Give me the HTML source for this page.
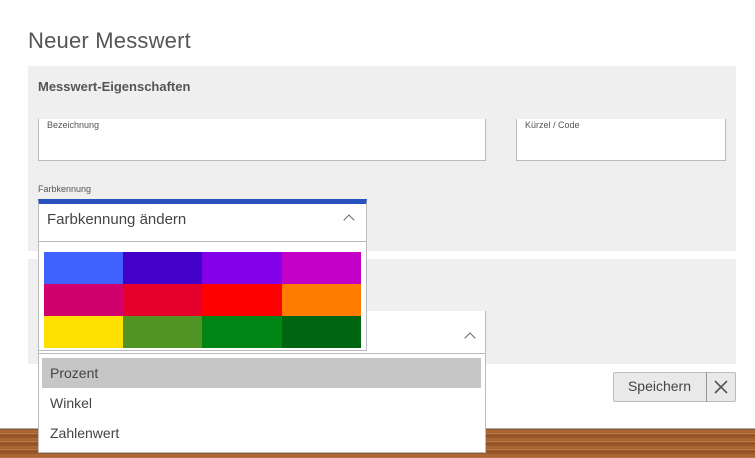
<!DOCTYPE html><html><head><style>
body{margin:0;width:755px;height:458px;position:relative;overflow:hidden;background:#fff;font-family:"Liberation Sans",sans-serif;color:#444}
div{position:absolute;box-sizing:border-box}
.wood{left:0;top:428px;width:755px;height:30px;border-top:1px solid #aaa;background:repeating-linear-gradient(180deg,#8a4a22 0,#b8713d 2px,#9c5a2c 3px,#c47f48 5px,#7e4220 6px,#a8652f 8px)}
.p{background:#efefef;left:28px;width:708px}
.inp{background:#fff;border:1px solid #bbb;border-top:none}
.lab{font-size:9px;color:#555}
.chev{width:8px;height:8px;border-left:1.5px solid #666;border-top:1.5px solid #666;transform:rotate(45deg)}
</style></head><body>
<div style="left:28px;top:28px;font-size:22px;color:#555;letter-spacing:0.2px">Neuer Messwert</div>
<div class="p" style="top:66px;height:185px"></div>
<div style="left:38px;top:79px;font-size:13px;font-weight:bold;color:#555">Messwert-Eigenschaften</div>
<div class="inp" style="left:38px;top:119px;width:448px;height:42px"></div>
<div class="lab" style="left:47px;top:120px">Bezeichnung</div>
<div class="inp" style="left:516px;top:119px;width:210px;height:42px"></div>
<div class="lab" style="left:525px;top:120px">Kürzel / Code</div>
<div class="lab" style="left:38px;top:184px">Farbkennung</div>
<div class="p" style="top:259px;height:105px"></div>
<div style="left:38px;top:311px;width:448px;height:43px;background:#fff;border:1px solid #bbb;border-top:none"></div>
<div class="chev" style="left:466px;top:334px"></div>
<div style="left:38px;top:199px;width:329px;height:43px;background:#fff;border:1px solid #bbb;border-top:5px solid #2a52be"></div>
<div style="left:47px;top:211px;font-size:15px;color:#444">Farbkennung ändern</div>
<div class="chev" style="left:345px;top:216px"></div>
<div style="left:38px;top:241px;width:329px;height:110px;background:#fff;border:1px solid #bbb"></div>
<div style="left:44px;top:252px;width:317px;height:96px;display:grid;grid-template-columns:79px 79px 80px 79px;grid-template-rows:32px 32px 32px">
<i style="background:#3f62ff"></i><i style="background:#4200c8"></i><i style="background:#8400e8"></i><i style="background:#c400c8"></i>
<i style="background:#d0006f"></i><i style="background:#e4002a"></i><i style="background:#ff0000"></i><i style="background:#ff7c00"></i>
<i style="background:#fde000"></i><i style="background:#529423"></i><i style="background:#018616"></i><i style="background:#006511"></i>
</div>
<div class="wood"></div>
<div style="left:38px;top:353px;width:448px;height:100px;background:#fff;border:1px solid #bbb"></div>
<div style="left:42px;top:358px;width:439px;height:30px;background:#c6c6c6"></div>
<div style="left:50px;top:365px;font-size:14px">Prozent</div>
<div style="left:50px;top:395px;font-size:14px">Winkel</div>
<div style="left:50px;top:425px;font-size:14px">Zahlenwert</div>
<div style="left:613px;top:372px;width:123px;height:30px;background:#e9e9e9;border:1px solid #bbb;border-radius:2px"></div>
<div style="left:706px;top:372px;width:1px;height:30px;background:#999"></div>
<div style="left:613px;top:378px;width:93px;text-align:center;font-size:14px">Speichern</div>
<svg style="position:absolute;left:714px;top:380px" width="14" height="14"><path d="M1 1L13 13M13 1L1 13" stroke="#555" stroke-width="1.6"/></svg>
</body></html>
